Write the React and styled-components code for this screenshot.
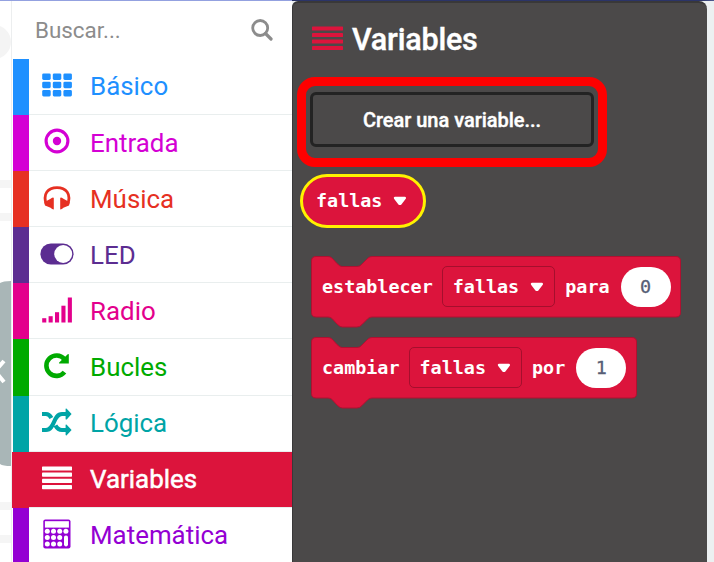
import React from "react";
import styled, { createGlobalStyle } from "styled-components";

const RED = "#dc143c";

const Global = createGlobalStyle`
  * { box-sizing: border-box; }
  body { margin: 0; overflow: hidden; background: #ecf0f1; }
`;

const Page = styled.div`
  position: relative;
  width: 714px;
  height: 562px;
  overflow: hidden;
  display: flex;
  background: #ecf0f1;
  font-family: Roboto, sans-serif;
`;
const TopRule = styled.div`
  position: absolute;
  inset: 0 0 auto 0;
  height: 1px;
  background: linear-gradient(90deg, #93a1e0 292px, #2b3468 292px, #2b3468 700px, #4f5a90 714px);
`;
const Simulator = styled.div`
  width: 12px;
  flex: none;
  background: #fff;
  overflow: hidden;
  border-right: 1px solid #eceeef;
`;
const Toolbox = styled.aside`
  width: 280px;
  flex: none;
  background: #fff;
  overflow: hidden;
`;
const Search = styled.div`
  height: 58.8px;
  padding: 1px 19px 0 23px;
  display: flex;
  align-items: center;
  justify-content: space-between;
  color: #8c8c8c;
  font-size: 22.4px;
`;
const Row = styled.div`
  height: 56.13px;
  display: flex;
  color: ${(p) => (p.$active ? "#fff" : p.$color)};
  background: ${(p) => (p.$active ? p.$color : "#fff")};
  &::before {
    content: "";
    width: 16px;
    margin-left: 1px;
    background: ${(p) => p.$color};
  }
`;
const RowBody = styled.div`
  flex: 1;
  display: flex;
  align-items: center;
  border-bottom: 1px solid #e9eeee;
`;
const IconCell = styled.div`
  width: 56px;
  display: grid;
  place-items: center;
  svg { display: block; margin-top: -2px; }
`;
const Label = styled.span`
  margin: 0.2px 0 0 5px;
  font-size: 25.9px;
  line-height: 30px;
  -webkit-text-stroke: ${(p) => (p.$active ? "0.5px #fff" : "0")};
`;
const Flyout = styled.main`
  width: 415px;
  flex: none;
  margin-top: 1px;
  padding: 0 0 0 8px;
  background: #4b4949;
  border: 1px solid #393839;
  border-width: 2px 0 0 1px;
  border-radius: 6px 8px 0 0;
`;
const Title = styled.h1`
  margin: 20px 0 0 11px;
  height: 33px;
  display: flex;
  align-items: center;
  gap: 9px;
  color: #fff;
  font-size: 30.5px;
  font-weight: 500;
  letter-spacing: -0.2px;
  -webkit-text-stroke: 0.4px #fff;
  svg { margin-top: -2px; }
`;
const Highlight = styled.div`
  width: 310px;
  height: 90px;
  margin: 21px 0 0 -4px;
  padding: 7px 5px;
  border: 9px solid #fe0000;
  border-radius: 18px;
`;
const CreateButton = styled.button`
  display: block;
  width: 284px;
  height: 55px;
  margin: -1px 0 0 -1px;
  border: 3.5px solid #232323;
  border-radius: 6px;
  background: #4b4949;
  color: #fff;
  font: 500 20px Roboto, sans-serif;
  letter-spacing: -0.03px;
  -webkit-text-stroke: 0.4px #fff;
  padding: 0;
`;
const mono = `
  font-family: "DejaVu Sans Mono", monospace;
  font-size: 18.4px;
  font-weight: 700;
  line-height: 24px;
  color: #fff;
  white-space: pre;
`;
const Reporter = styled.div`
  ${mono}
  width: 126px;
  height: 54px;
  margin: 7px 0 0 -1px;
  border: 3.5px solid #fff200;
  border-radius: 28px;
  background: ${RED};
  display: flex;
  align-items: center;
  gap: 11px;
  padding-left: 13px;
`;
const Block = styled.div`
  ${mono}
  position: relative;
  width: ${(p) => p.$width}px;
  height: 61px;
  margin: ${(p) => p.$top}px 0 0 10px;
  padding-left: 11px;
  display: flex;
  align-items: center;
`;
const Shape = styled.svg`
  position: absolute;
  left: 0;
  top: 0;
  overflow: visible;
`;
const Word = styled.span`
  position: relative;
`;
const Dropdown = styled.span`
  position: relative;
  width: 113px;
  height: 41px;
  margin: 0 10px 0 9.5px;
  padding-left: 9.5px;
  display: flex;
  align-items: center;
  gap: 11px;
  border: 1px solid #a50f2d;
  border-radius: 5px;
`;
const Value = styled.span`
  position: relative;
  width: 50px;
  height: 40px;
  margin-left: 11px;
  border-radius: 20px;
  background: #fff;
  color: #575e75;
  display: grid;
  place-items: center;
  font-weight: 400;
  -webkit-text-stroke: 0.3px #575e75;
`;

const Bars = ({ w = 30, h = 24, color = "currentColor", step = 6.2 }) => (
  <svg width={w} height={h} viewBox={`0 0 ${w} ${h}`} fill={color}>
    {[0, 1, 2, 3].map((i) => <rect key={i} y={i * step + 0.4} width={w} height="4.2" rx="0.7" />)}
  </svg>
);
const Caret = () => (
  <svg width="14" height="10" viewBox="0 0 14 10">
    <path d="M2 2H11.8L7.8 7.4Q6.9 8.3 6 7.4Z" fill="#fff" stroke="#fff" strokeWidth="2.4" strokeLinejoin="round" />
  </svg>
);
const SearchIcon = () => (
  <svg width="22" height="22" viewBox="0 0 22 22" fill="none" stroke="currentColor">
    <circle cx="9.2" cy="9" r="7.5" strokeWidth="2.8" />
    <path d="M14.5 14.5L20 20" strokeWidth="3.2" strokeLinecap="round" />
  </svg>
);
const icons = {
  grid: (
    <svg width="30" height="24" fill="currentColor">
      {[0, 1, 2].map((r) => [0, 1, 2].map((c) => (
        <rect key={`${r}${c}`} x={c * 10.6 + 0.2} y={r * 8.3 + 0.4} width="8.5" height="6.5" rx="1.4" />
      )))}
    </svg>
  ),
  target: (
    <svg width="26" height="26">
      <circle cx="13" cy="13" r="10.9" fill="none" stroke="currentColor" strokeWidth="3.1" />
      <circle cx="13" cy="13" r="4.2" fill="currentColor" />
    </svg>
  ),
  headphones: (
    <svg width="28" height="26">
      <path d="M3.3 19C-.5 9 5 2.6 14 2.6S28.5 9 24.7 19" fill="none" stroke="currentColor" strokeWidth="2.8" />
      <path d="M1.2 17.2L7.6 13.7Q10.4 11.8 10.8 13V24.5Q9 24.5 7.6 22.8L2 20.4ZM26.8 17.2L20.4 13.7Q17.6 11.8 17.2 13V24.5Q19 24.5 20.4 22.8L26 20.4Z" fill="currentColor" />
    </svg>
  ),
  toggle: (
    <svg width="34" height="22">
      <rect x="0.4" y="0.5" width="33.2" height="21" rx="10.5" fill="currentColor" />
      <circle cx="23.2" cy="11" r="9" fill="#fff" />
    </svg>
  ),
  signal: (
    <svg width="30" height="26" fill="currentColor">
      {[4.3, 6.3, 10.3, 16.8, 25].map((h, i) => <rect key={i} x={0.2 + i * 6.4} y={25.5 - h} width="4.1" height={h} />)}
    </svg>
  ),
  repeat: (
    <svg width="26" height="26">
      <path d="M20.5 19.1A10.2 10.2 0 1 1 20.3 6" fill="none" stroke="currentColor" strokeWidth="4.6" />
      <path d="M24.8 1.2V10.6H15.4Q14.6 10.4 15.2 9.6L24 1Z" fill="currentColor" />
    </svg>
  ),
  shuffle: (
    <svg width="30" height="28">
      <path d="M0 6H4Q7.2 6 9.4 10M13.4 17.5Q16 22 20 22H24M0 22H4C13 22 11 6 20 6H24" fill="none" stroke="currentColor" strokeWidth="4.2" />
      <path d="M23.6 .8Q24.2 .4 24.7 .8L29.6 6L24.7 11.4Q24.2 11.8 23.6 11.3ZM23.6 16.8Q24.2 16.4 24.7 16.8L29.6 22L24.7 27.2Q24.2 27.6 23.6 27.1Z" fill="currentColor" />
    </svg>
  ),
  bars: <Bars />,
  calculator: (
    <svg width="29" height="30">
      <rect x="0.3" y="0.6" width="27.2" height="29" rx="2" fill="currentColor" />
      <rect x="1.9" y="2.2" width="24" height="6.4" fill="#fff" />
      {[12.3, 18.6, 25].map((y) => [4.3, 10.5, 16.7, 22.9].map((x) =>
        x > 20 && y > 13 ? null : <circle key={`${x}${y}`} cx={x} cy={y} r="2.5" fill="#fff" />))}
      <rect x="21" y="16.4" width="4" height="11" rx="1.8" fill="#fff" />
    </svg>
  ),
};

const rows = [
  ["Básico", "#1e90ff", "grid"],
  ["Entrada", "#d400d4", "target"],
  ["Música", "#e63022", "headphones"],
  ["LED", "#5c2d91", "toggle"],
  ["Radio", "#e3008c", "signal"],
  ["Bucles", "#00aa00", "repeat"],
  ["Lógica", "#00a4a6", "shuffle"],
  ["Variables", RED, "bars"],
  ["Matemática", "#9400d3", "calculator"],
];

const StackBlock = ({ width, top, before, between, value }) => (
  <Block $width={width} $top={top}>
    <Shape width={width} height="71">
      <path
        d={`M.5 5Q.5 .5 5 .5H17Q19.5 .5 21 2L26 7.5Q29 10.5 31 10.5H46Q49 10.5 51 8L57 2Q58.5 .5 61 .5H${width - 5}Q${width - .5} .5 ${width - .5} 5V56.5Q${width - .5} 61 ${width - 5} 61H61Q58.5 61 57 62.5L51 68.5Q49 71 46 71H31Q29 71 26 68L21 62.5Q19.5 61 17 61H5Q.5 61 .5 56.5Z`}
        fill={RED} stroke="#b01030" strokeWidth="1"
      />
    </Shape>
    <Word>{before}</Word>
    <Dropdown>fallas<Caret /></Dropdown>
    <Word>{between}</Word>
    <Value>{value}</Value>
  </Block>
);

export default function App() {
  return (
    <Page>
      <Global />
      <Simulator>
        <svg width="11" height="562">
          <circle cx="-6" cy="42" r="17" fill="#f4f4f4" />
          <path d="M0 180H11V188H0ZM0 213H11V221H0ZM0 502H11V510H0ZM0 535H11V543H0Z" fill="#f5f5f5" />
          <path d="M0 283Q3 281 11 281V466Q3 466 0 464Z" fill="#a9b6b7" />
          <path d="M4 361L-5 371L4 382" fill="none" stroke="#fff" strokeWidth="4" />
        </svg>
      </Simulator>
      <Toolbox>
        <Search><span>Buscar...</span><SearchIcon /></Search>
        {rows.map(([name, color, icon]) => (
          <Row key={name} $color={color} $active={name === "Variables"}>
            <RowBody>
              <IconCell>{icons[icon]}</IconCell>
              <Label $active={name === "Variables"}>{name}</Label>
            </RowBody>
          </Row>
        ))}
      </Toolbox>
      <Flyout>
        <Title><Bars w={31} h={25} color={RED} step={6.5} />Variables</Title>
        <Highlight><CreateButton>Crear una variable...</CreateButton></Highlight>
        <Reporter>fallas<Caret /></Reporter>
        <StackBlock width={370} top={28} before="establecer" between="para" value="0" />
        <StackBlock width={326} top={20} before="cambiar" between="por" value="1" />
      </Flyout>
      <TopRule />
    </Page>
  );
}
